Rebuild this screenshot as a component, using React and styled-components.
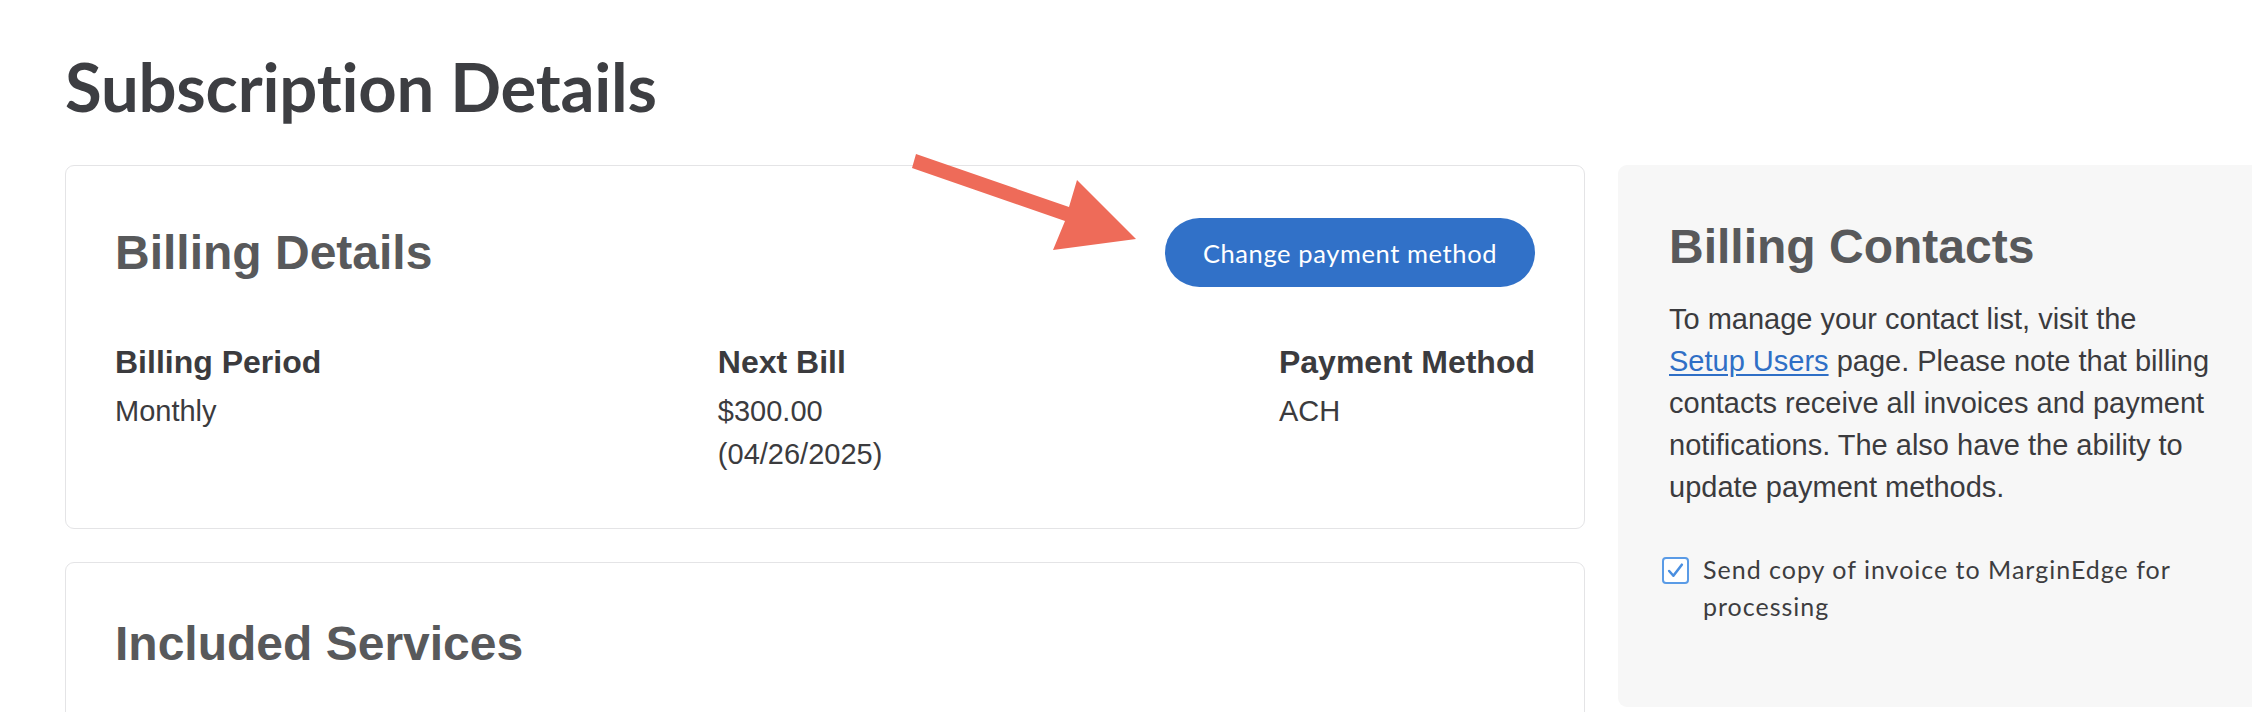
import styled, { createGlobalStyle } from "styled-components"

const Global = createGlobalStyle`
    body {
        margin: 0;
        background: #ffffff;
        overflow: hidden;
        font-family: "Liberation Sans", Arial, sans-serif;
    }
`

const Page = styled.div`
    position: relative;
    width: 2252px;
    height: 712px;
    padding-left: 65px;
    box-sizing: border-box;
    overflow: hidden;
`

const Title = styled.h1`
    margin: 0;
    padding-top: 53px;
    height: 165px;
    box-sizing: border-box;
    font-family: "Lato", sans-serif;
    font-weight: 700;
    font-size: 67px;
    line-height: 67px;
    color: #3d3e42;
    letter-spacing: -0.2px;
`

const Layout = styled.div`
    display: flex;
    gap: 33px;
    align-items: flex-start;
`

const Column = styled.div`
    width: 1520px;
    display: flex;
    flex-direction: column;
    gap: 33px;
    flex-shrink: 0;
`

const Card = styled.div`
    border: 1px solid #e4e4e6;
    border-radius: 9px;
    padding: 52px 49px 52px 49px;
    background: #ffffff;
    min-height: ${props => props.minHeight || "auto"};
`

const HeadRow = styled.div`
    display: flex;
    justify-content: space-between;
    align-items: center;
`

const Heading = styled.h2`
    margin: 0;
    font-family: "Liberation Sans", Arial, sans-serif;
    font-weight: 700;
    font-size: 48px;
    line-height: 58px;
    color: #58595b;
`

const Button = styled.button`
    width: 370px;
    height: 69px;
    border: none;
    border-radius: 35px;
    background: #3171c8;
    color: #ffffff;
    font-family: "Lato", sans-serif;
    font-size: 25.5px;
    letter-spacing: 0.6px;
    cursor: pointer;
`

const Fields = styled.div`
    display: flex;
    justify-content: space-between;
    margin-top: 52px;
`

const Field = styled.div`
    display: flex;
    flex-direction: column;
`

const Label = styled.div`
    font-weight: 700;
    font-size: 32px;
    line-height: 46px;
    color: #3b3b3e;
    margin-bottom: 5px;
`

const Value = styled.div`
    font-size: 29px;
    line-height: 43px;
    color: #3b3b3e;
`

const Panel = styled.div`
    width: 660px;
    flex-shrink: 0;
    min-height: 542px;
    box-sizing: border-box;
    background: #f7f7f7;
    border-radius: 9px;
    padding: 53px 60px 40px 51px;
`

const Text = styled.p`
    margin: 22px 0 0;
    width: 542px;
    font-size: 29px;
    line-height: 42px;
    color: #3b3b3e;
`

const Link = styled.a`
    color: #2f6fc6;
    text-decoration: underline;
    text-underline-offset: 3px;
    cursor: pointer;
`

const CheckRow = styled.label`
    display: flex;
    align-items: flex-start;
    gap: 14px;
    margin-top: 43px;
    margin-left: -7px;
    width: 540px;
`

const Box = styled.span`
    flex-shrink: 0;
    width: 23px;
    height: 23px;
    margin-top: 6px;
    border: 2.5px solid #5a9be6;
    border-radius: 4px;
    background: #ffffff;
    display: flex;
    align-items: center;
    justify-content: center;
`

const CheckText = styled.span`
    font-family: "Lato", sans-serif;
    font-size: 25px;
    line-height: 37px;
    color: #3d3d40;
    letter-spacing: 1px;
`

const Arrow = styled.svg`
    position: absolute;
    left: 0;
    top: 0;
    pointer-events: none;
`

export default function App() {
    return (
        <Page>
            <Global />
            <Title>Subscription Details</Title>
            <Layout>
                <Column>
                    <Card>
                        <HeadRow>
                            <Heading>Billing Details</Heading>
                            <Button>Change payment method</Button>
                        </HeadRow>
                        <Fields>
                            <Field>
                                <Label>Billing Period</Label>
                                <Value>Monthly</Value>
                            </Field>
                            <Field>
                                <Label>Next Bill</Label>
                                <Value>$300.00</Value>
                                <Value>(04/26/2025)</Value>
                            </Field>
                            <Field>
                                <Label>Payment Method</Label>
                                <Value>ACH</Value>
                            </Field>
                        </Fields>
                    </Card>
                    <Card minHeight="300px">
                        <Heading>Included Services</Heading>
                    </Card>
                </Column>
                <Panel>
                    <Heading>Billing Contacts</Heading>
                    <Text>
                        To manage your contact list, visit the <Link>Setup Users</Link> page. Please note that billing
                        contacts receive all invoices and payment notifications. The also have the ability to update
                        payment methods.
                    </Text>
                    <CheckRow>
                        <Box>
                            <svg width="19" height="19" viewBox="0 0 18 18">
                                <path d="M3 9.5 L7 14 L15 3.5" fill="none" stroke="#4a8fe0" strokeWidth="2.4" strokeLinecap="round" strokeLinejoin="round" />
                            </svg>
                        </Box>
                        <CheckText>Send copy of invoice to MarginEdge for processing</CheckText>
                    </CheckRow>
                </Panel>
            </Layout>
            <Arrow width="2252" height="712" viewBox="0 0 2252 712">
                <polygon
                    points="916,154 1069,207 1077,180 1136,239 1053,250 1065,221 912,168"
                    fill="#ee6b59"
                />
            </Arrow>
        </Page>
    )
}
